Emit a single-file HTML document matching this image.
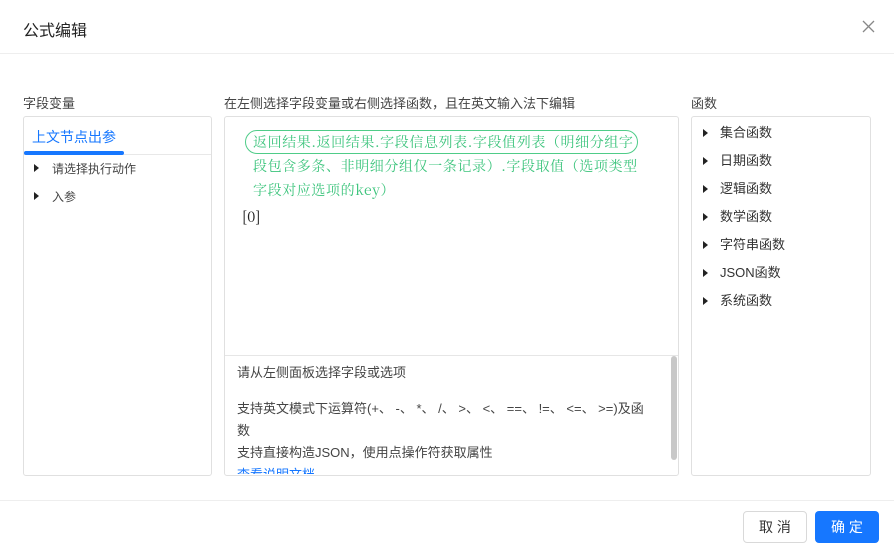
<!DOCTYPE html>
<html><head><meta charset="utf-8"><style>
*{box-sizing:border-box;margin:0;padding:0}
body{width:894px;height:551px;background:#fff;font-family:"Liberation Sans","Noto Sans CJK SC",sans-serif;color:#333;position:relative;overflow:hidden;font-size:13px}
.a{position:absolute}
.box{position:absolute;border:1px solid #e0e0e0;border-radius:3px}
.tri{position:absolute;width:0;height:0;border-top:4px solid transparent;border-bottom:4px solid transparent;border-left:5px solid #222}
.fi{position:absolute;left:720px;font-size:13px;color:#333;line-height:16px}
.g{position:absolute;left:253px;color:#3cc47c;font-family:"Noto Serif CJK SC","Liberation Serif",serif;font-size:14px;line-height:18px;white-space:nowrap;letter-spacing:0.6px}
</style></head><body>
<div class="a" style="left:23px;top:17px;font-size:16px;color:#222">公式编辑</div>
<svg class="a" style="left:862px;top:20px" width="13" height="13" viewBox="0 0 13 13"><path d="M1 1L12 12M12 1L1 12" stroke="#888" stroke-width="1.3"/></svg>
<div class="a" style="left:0;top:53px;width:894px;height:1px;background:#eee"></div>

<div class="a" style="left:23px;top:93px;color:#444">字段变量</div>
<div class="a" style="left:224px;top:93px;color:#444">在左侧选择字段变量或右侧选择函数，且在英文输入法下编辑</div>
<div class="a" style="left:691px;top:93px;color:#444">函数</div>

<div class="box" style="left:23px;top:116px;width:189px;height:360px"></div>
<div class="a" style="left:32px;top:127px;color:#1677ff;font-size:14px">上文节点出参</div>
<div class="a" style="left:24px;top:154px;width:187px;height:1px;background:#e8e8e8"></div>
<div class="a" style="left:24px;top:151px;width:100px;height:4px;background:#1677ff;border-radius:2px"></div>
<div class="tri" style="left:34px;top:164px"></div>
<div class="a" style="left:52px;top:160px;font-size:12px;color:#444">请选择执行动作</div>
<div class="tri" style="left:34px;top:192px"></div>
<div class="a" style="left:52px;top:188px;font-size:12px;color:#444">入参</div>

<div class="box" style="left:224px;top:116px;width:455px;height:360px"></div>
<div class="a" style="left:245px;top:130px;width:393px;height:24px;border:1px solid #4fcc88;border-radius:12px"></div>
<div class="g" style="top:133px">返回结果.返回结果.字段信息列表.字段值列表（明细分组字</div>
<div class="g" style="top:157px">段包含多条、非明细分组仅一条记录）.字段取值（选项类型</div>
<div class="g" style="top:181px">字段对应选项的key）</div>
<div class="a" style="left:242px;top:206px;font-family:'Noto Serif CJK SC','Liberation Serif',serif;font-size:15px;color:#222">[0]</div>
<div class="a" style="left:225px;top:355px;width:453px;height:1px;background:#e6e6e6"></div>
<div class="a" style="left:671px;top:356px;width:6px;height:104px;background:#c8c8c8;border-radius:3px"></div>
<div class="a" style="left:225px;top:356px;width:446px;height:118px;overflow:hidden;font-size:13px;color:#444;line-height:22px">
<div style="position:absolute;left:12px;top:6px">请从左侧面板选择字段或选项</div>
<div style="position:absolute;left:12px;top:42px;width:440px;white-space:nowrap">支持英文模式下运算符(+、 -、 *、 /、 &gt;、 &lt;、 ==、 !=、 &lt;=、 &gt;=)及函<br>数</div>
<div style="position:absolute;left:12px;top:86px">支持直接构造JSON，使用点操作符获取属性</div>
<div style="position:absolute;left:12px;top:108px;color:#1677ff">查看说明文档</div>
</div>

<div class="box" style="left:691px;top:116px;width:180px;height:360px"></div>
<div class="tri" style="left:703px;top:129px"></div><div class="fi" style="top:125px">集合函数</div>
<div class="tri" style="left:703px;top:157px"></div><div class="fi" style="top:153px">日期函数</div>
<div class="tri" style="left:703px;top:185px"></div><div class="fi" style="top:181px">逻辑函数</div>
<div class="tri" style="left:703px;top:213px"></div><div class="fi" style="top:209px">数学函数</div>
<div class="tri" style="left:703px;top:241px"></div><div class="fi" style="top:237px">字符串函数</div>
<div class="tri" style="left:703px;top:269px"></div><div class="fi" style="top:265px">JSON函数</div>
<div class="tri" style="left:703px;top:297px"></div><div class="fi" style="top:293px">系统函数</div>

<div class="a" style="left:0;top:500px;width:894px;height:1px;background:#eee"></div>
<div class="a" style="left:743px;top:511px;width:64px;height:32px;border:1px solid #d9d9d9;border-radius:4px;text-align:center;line-height:30px;font-size:14px;color:#333">取 消</div>
<div class="a" style="left:815px;top:511px;width:64px;height:32px;background:#1677ff;border-radius:4px;text-align:center;line-height:32px;font-size:14px;color:#fff">确 定</div>
</body></html>
